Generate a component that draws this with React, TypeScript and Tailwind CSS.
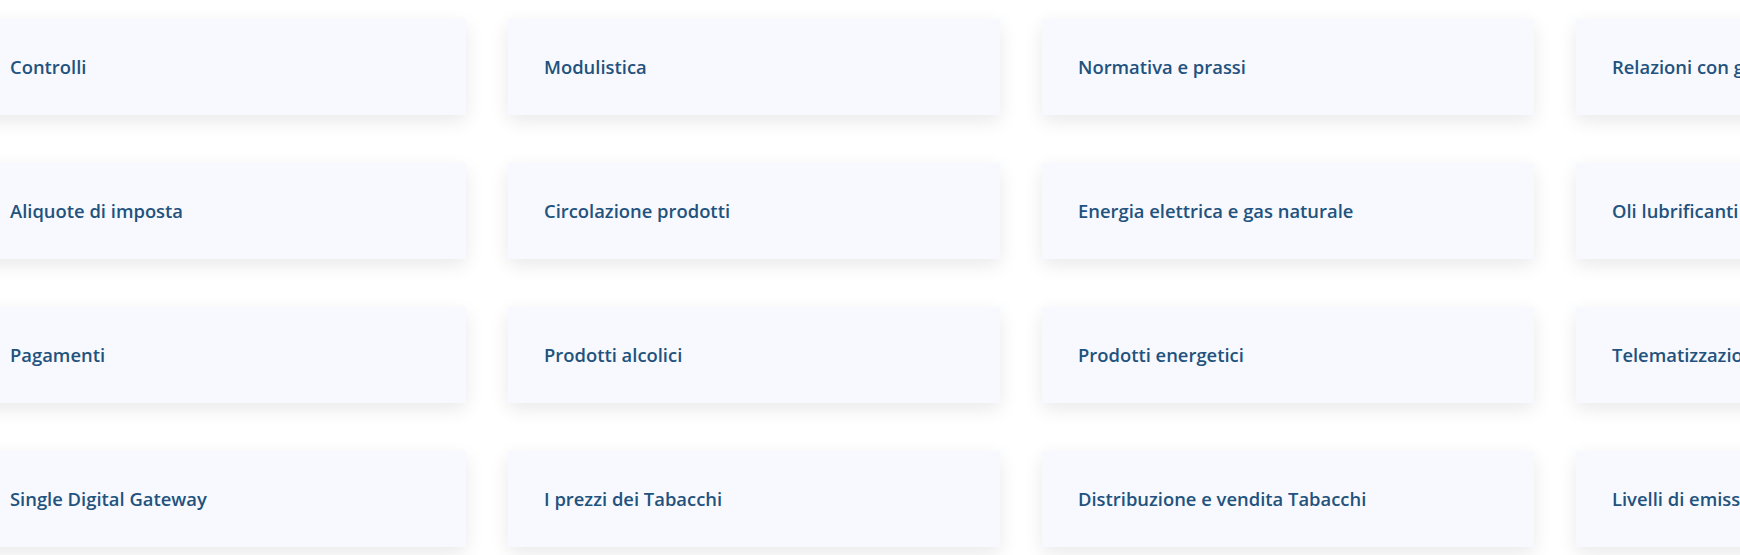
const rows: string[][] = [
  ["Controlli", "Modulistica", "Normativa e prassi", "Relazioni con gli utenti"],
  ["Aliquote di imposta", "Circolazione prodotti", "Energia elettrica e gas naturale", "Oli lubrificanti"],
  ["Pagamenti", "Prodotti alcolici", "Prodotti energetici", "Telematizzazione"],
  ["Single Digital Gateway", "I prezzi dei Tabacchi", "Distribuzione e vendita Tabacchi", "Livelli di emissione"],
];

function TopicCard({ label }: { label: string }) {
  return (
    <a
      href="#"
      className="flex h-[96px] w-[492px] items-center bg-[#f7f9fe] pl-[36px] shadow-[0_6px_18px_rgba(0,0,0,0.09)]"
    >
      <span className="whitespace-nowrap text-[18.4px] font-semibold text-[#22527d]">{label}</span>
    </a>
  );
}

export default function App() {
  return (
    <div className="h-[555px] w-[1740px] overflow-hidden bg-white font-['Open_Sans',sans-serif]">
      <div className="ml-[-26px] grid w-max grid-cols-[repeat(4,492px)] gap-x-[42px] gap-y-[48px] pt-[19px]">
        {rows.flat().map((label) => (
          <TopicCard key={label} label={label} />
        ))}
      </div>
    </div>
  );
}
